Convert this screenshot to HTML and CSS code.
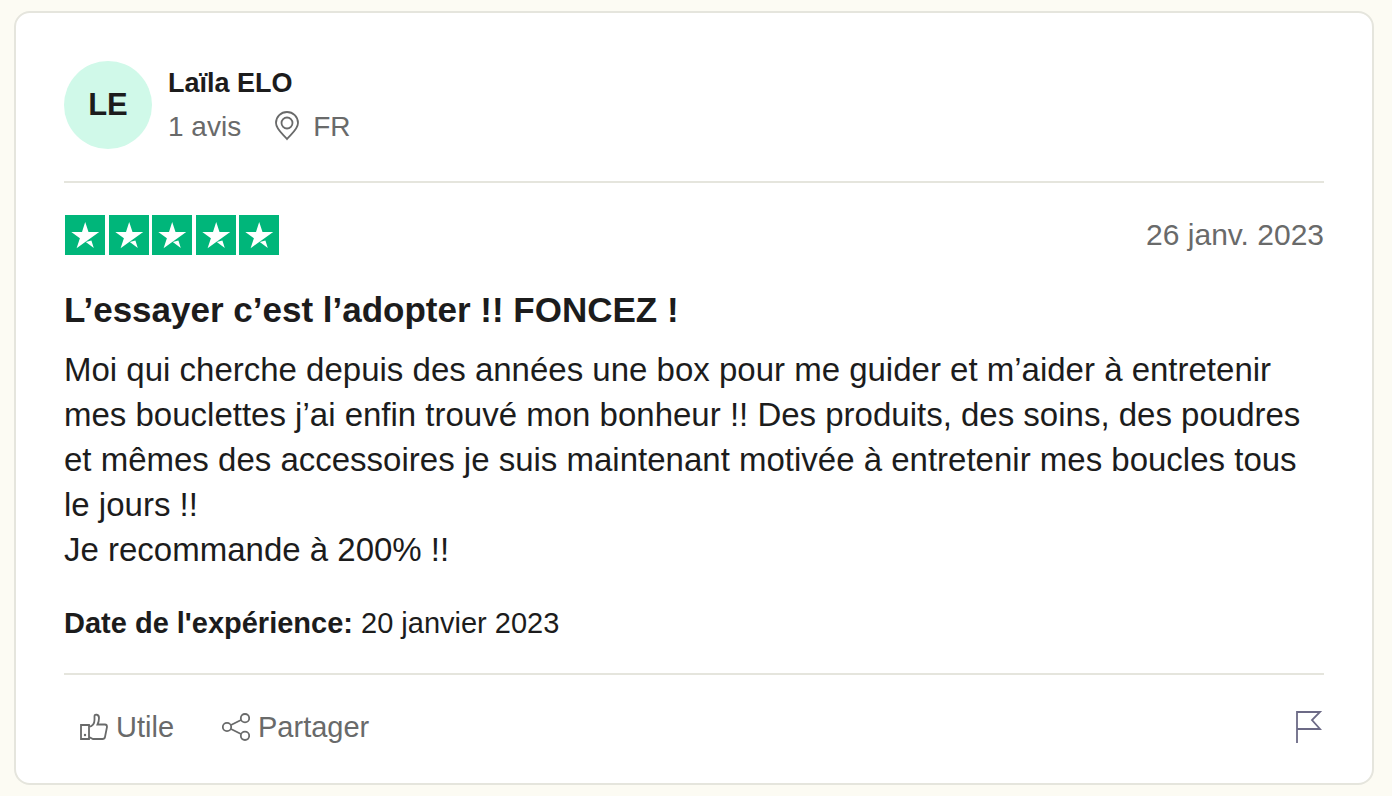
FILE: index.html
```
<!DOCTYPE html>
<html lang="fr">
<head>
    <meta charset="UTF-8">
    <meta name="viewport" content="width=device-width, initial-scale=1.0">
    <title>Avis de Laïla ELO</title>
    <link rel="stylesheet" href="styles.css">
</head>
<body>
    <svg class="sprite" aria-hidden="true">
        <symbol id="star" viewBox="0 0 40 40">
            <rect width="40" height="40" fill="#00b67a"/>
            <path fill="#fff" d="M34.200 17H23.500L20.200 7 17 17H6.300l8.600 6.200-3.300 10 8.600-6.200 5.300-3.800zM20.800 27l5.600-1.500L28.800 33z"/>
        </symbol>
    </svg>

    <article class="review">
        <header class="consumer">
            <div class="avatar">LE</div>
            <div>
                <a class="name" href="#">Laïla ELO</a>
                <div class="details">
                    <span>1 avis</span>
                    <span class="country">
                        <svg width="24" height="32" viewBox="0 0 24 32" aria-hidden="true">
                            <path d="M12 28C9 24 1 18.500 1 12a11 11 0 0 1 22 0C23 18.500 15 24 12 28z"/>
                            <circle cx="12" cy="12" r="5.500"/>
                        </svg>
                        FR
                    </span>
                </div>
            </div>
        </header>

        <section class="content">
            <div class="rating">
                <div class="stars" role="img" aria-label="Noté 5 sur 5 étoiles">
                    <svg><use href="#star"/></svg>
                    <svg><use href="#star"/></svg>
                    <svg><use href="#star"/></svg>
                    <svg><use href="#star"/></svg>
                    <svg><use href="#star"/></svg>
                </div>
                <time datetime="2023-01-26">26 janv. 2023</time>
            </div>
            <h2>L’essayer c’est l’adopter !! FONCEZ !</h2>
            <p class="text">Moi qui cherche depuis des années une box pour me guider et m’aider à entretenir mes bouclettes j’ai enfin trouvé mon bonheur !! Des produits, des soins, des poudres et mêmes des accessoires je suis maintenant motivée à entretenir mes boucles tous le jours !!<br>Je recommande à 200% !!</p>
            <p class="experience"><b>Date de l'expérience:</b> 20 janvier 2023</p>
        </section>

        <footer class="actions">
            <button type="button">
                <svg width="28" height="28" viewBox="0 0 28 28" aria-hidden="true">
                    <path d="M1 12h8v14H1zM9 14c4-1 5.500-4 5.500-7V3c0-2 4.500-2 4.500 2 0 2.500-.5 4.500-1.500 6.500H25c1.500 0 2 1 2 2.500l-2 10c-.3 1.500-1 2-2.500 2H13l-4-2"/>
                    <circle class="dot" cx="5" cy="22" r="1.200"/>
                </svg>
                Utile
            </button>
            <button type="button">
                <svg width="28" height="28" viewBox="0 0 28 28" aria-hidden="true">
                    <circle cx="5" cy="14" r="4.200"/>
                    <circle cx="23" cy="5.200" r="4.200"/>
                    <circle cx="23" cy="22.800" r="4.200"/>
                    <path d="M9 12l10-5M9 16l10 5"/>
                </svg>
                Partager
            </button>
            <button type="button" class="flag" aria-label="Signaler">
                <svg width="28" height="32" viewBox="0 0 28 32" aria-hidden="true">
                    <path d="M1 0v32M1 1h23l-8 8 8 9H1"/>
                </svg>
            </button>
        </footer>
    </article>
</body>
</html>
```
FILE: styles.css
```
* {
    box-sizing: border-box;
}
body {
    margin: 0;
    padding: 11px 18px 11px 14px;
    background: #fcfbf3;
    color: #1c1c1c;
    font-family: "Liberation Sans", Arial, Helvetica, sans-serif;
    font-size: 29px;
    line-height: 36px;
}
h2,
p {
    margin: 0;
}
svg {
    flex: none;
    fill: none;
    stroke: currentColor;
    stroke-width: 1.8;
}
.sprite {
    position: absolute;
    width: 0;
    height: 0;
}
.review {
    padding: 48px 48px 40px;
    background: #fff;
    border: 2px solid #e5e5dd;
    border-radius: 16px;
}

/* Auteur de l'avis */
.consumer {
    display: flex;
    align-items: center;
    gap: 16px;
    padding-bottom: 32px;
    border-bottom: 2px solid #e5e5dd;
}
.avatar {
    display: flex;
    align-items: center;
    justify-content: center;
    width: 88px;
    height: 88px;
    border-radius: 50%;
    background: #d0f9e9;
    font-size: 31px;
    font-weight: bold;
}
.name {
    display: block;
    color: inherit;
    font-size: 27px;
    font-weight: bold;
    text-decoration: none;
}
.details {
    display: flex;
    gap: 34px;
    margin-top: 8px;
    color: #696a6a;
    font-size: 28px;
}
.country {
    display: flex;
    align-items: center;
    gap: 14px;
}

/* Contenu */
.content {
    padding: 32px 0;
    border-bottom: 2px solid #e5e5dd;
}
.rating {
    display: flex;
    align-items: center;
    justify-content: space-between;
    color: #696a6a;
}
.rating time {
    font-size: 30px;
}
.stars {
    display: flex;
    justify-content: space-between;
    width: 215px;
    padding-left: 1px;
}
.stars svg {
    width: 40px;
    height: 40px;
    stroke: none;
}
h2 {
    margin: 32px 0 14px;
    font-size: 35px;
    line-height: 46px;
}
.text {
    font-size: 33px;
    line-height: 45px;
}
.experience {
    margin-top: 33px;
}

/* Actions */
.actions {
    display: flex;
    align-items: center;
    gap: 48px;
    padding: 36px 0 0 16px;
}
button {
    display: flex;
    align-items: center;
    gap: 8px;
    padding: 0;
    border: 0;
    background: none;
    color: #696a6a;
    font: inherit;
    line-height: 32px;
    cursor: pointer;
}
.dot {
    fill: currentColor;
    stroke: none;
}
.flag {
    margin-left: auto;
    color: #6c6a86;
}
```
